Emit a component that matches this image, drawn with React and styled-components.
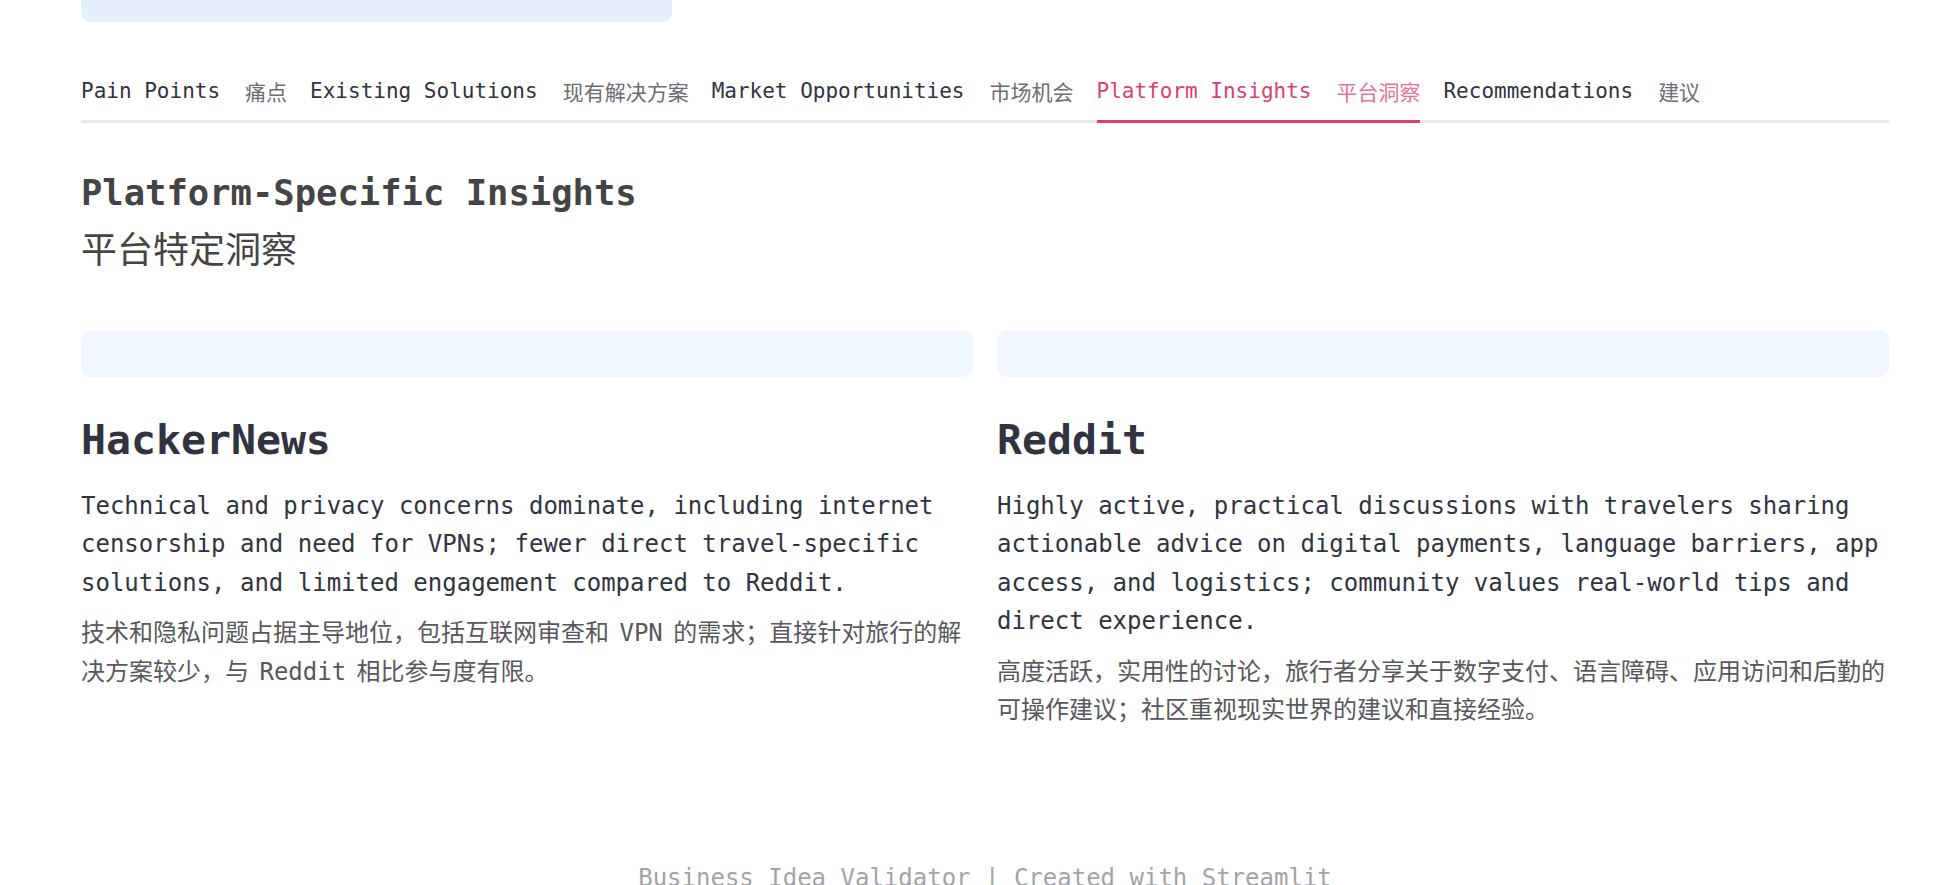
import React from 'react';
import styled, { createGlobalStyle } from 'styled-components';

const GlobalStyle = createGlobalStyle`
    html, body {
        margin: 0;
        padding: 0;
        background: #ffffff;
    }
    body {
        font-family: "DejaVu Sans Mono", "Noto Sans CJK SC", monospace;
        color: #31333f;
        overflow: hidden;
    }
`;

const Page = styled.div`
    width: 1808px;
    height: 885px;
    margin-left: 81px;
    overflow: hidden;
`;

const TopBanner = styled.div`
    width: 591px;
    height: 22px;
    background: #e6f0fb;
    border-radius: 0 0 10px 10px;
`;

const TabList = styled.div`
    display: flex;
    gap: 23px;
    height: 57px;
    margin-top: 44px;
    box-shadow: inset 0 -3px 0 #e8e8e9;
`;

const Tab = styled.div`
    display: flex;
    align-items: center;
    gap: 25px;
    box-sizing: border-box;
    height: 57px;
    padding-bottom: 5px;
    border-bottom: 3px solid ${p => (p.$active ? '#dc3f6b' : 'transparent')};
    font-size: 21px;
    white-space: nowrap;
    cursor: pointer;
`;

const TabEn = styled.span`
    color: ${p => (p.$active ? '#dc3f6b' : '#31333f')};
`;

const TabZh = styled.span`
    font-family: "Noto Sans CJK SC", sans-serif;
    color: ${p => (p.$active ? '#e27495' : '#6d6d72')};
`;

const Header = styled.div`
    margin-top: 43px;
    color: #444444;
`;

const Title = styled.h2`
    margin: 0;
    font-size: 35.5px;
    font-weight: bold;
    line-height: 54px;
`;

const TitleZh = styled.div`
    font-family: "Noto Sans CJK SC", sans-serif;
    font-size: 36px;
    line-height: 54px;
`;

const Columns = styled.div`
    display: grid;
    grid-template-columns: 1fr 1fr;
    gap: 24px;
    margin-top: 56px;
`;

const Column = styled.div`
    display: flex;
    flex-direction: column;
    min-width: 0;
`;

const Banner = styled.div`
    height: 47px;
    background: #f0f7fe;
    border-radius: 10px;
`;

const PlatformName = styled.h3`
    margin: 38px 0 0;
    font-size: 41.5px;
    font-weight: bold;
    line-height: 50px;
    color: #31333f;
`;

const Summary = styled.p`
    margin: 22px 0 0;
    font-size: 24px;
    line-height: 38.4px;
`;

const SummaryZh = styled.p`
    margin: 12px 0 0;
    font-size: 24px;
    line-height: 38.4px;
    color: #58585c;
    word-spacing: -4px;
`;

const Footer = styled.div`
    margin-top: 130px;
    text-align: center;
    font-size: 24px;
    line-height: 38.4px;
    color: #a3a3a6;
`;

const tabs = [
    { en: 'Pain Points', zh: '痛点' },
    { en: 'Existing Solutions', zh: '现有解决方案' },
    { en: 'Market Opportunities', zh: '市场机会' },
    { en: 'Platform Insights', zh: '平台洞察', active: true },
    { en: 'Recommendations', zh: '建议' }
];

const platforms = [
    {
        name: 'HackerNews',
        en: 'Technical and privacy concerns dominate, including internet censorship and need for VPNs; fewer direct travel-specific solutions, and limited engagement compared to Reddit.',
        zh: '技术和隐私问题占据主导地位，包括互联网审查和 VPN 的需求；直接针对旅行的解决方案较少，与 Reddit 相比参与度有限。'
    },
    {
        name: 'Reddit',
        en: 'Highly active, practical discussions with travelers sharing actionable advice on digital payments, language barriers, app access, and logistics; community values real-world tips and direct experience.',
        zh: '高度活跃，实用性的讨论，旅行者分享关于数字支付、语言障碍、应用访问和后勤的可操作建议；社区重视现实世界的建议和直接经验。'
    }
];

const App = () => (
    <>
        <GlobalStyle />
        <Page>
            <TopBanner />
            <TabList>
                {tabs.map(t => (
                    <Tab key={t.en} $active={t.active}>
                        <TabEn $active={t.active}>{t.en}</TabEn>
                        <TabZh $active={t.active}>{t.zh}</TabZh>
                    </Tab>
                ))}
            </TabList>
            <Header>
                <Title>Platform-Specific Insights</Title>
                <TitleZh>平台特定洞察</TitleZh>
            </Header>
            <Columns>
                {platforms.map(p => (
                    <Column key={p.name}>
                        <Banner />
                        <PlatformName>{p.name}</PlatformName>
                        <Summary>{p.en}</Summary>
                        <SummaryZh>{p.zh}</SummaryZh>
                    </Column>
                ))}
            </Columns>
            <Footer>Business Idea Validator | Created with Streamlit</Footer>
        </Page>
    </>
);

export default App;
